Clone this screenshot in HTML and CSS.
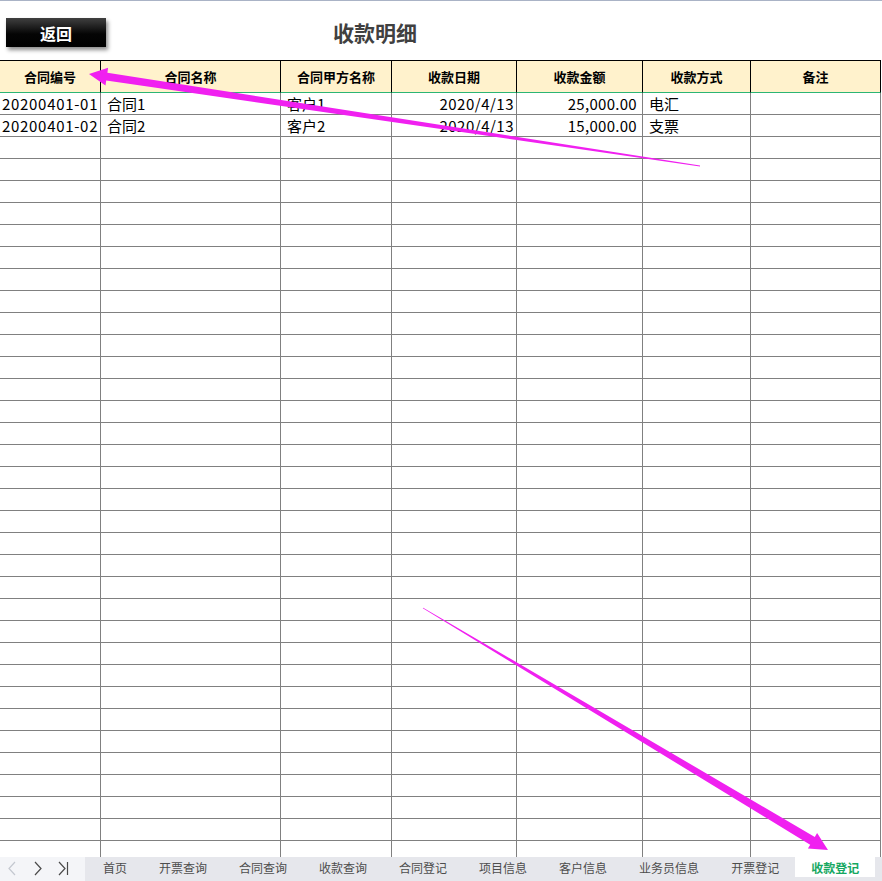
FILE: index.html
```html
<!DOCTYPE html>
<html lang="zh-CN">
<head>
    <meta charset="UTF-8">
    <title>收款明细</title>
    <link rel="stylesheet" href="styles.css">
</head>
<body>
    <div class="page">
        <div class="topbar">
            <button class="back-btn">返回</button>
            <div class="title">收款明细</div>
        </div>

        <div class="sheet">
            <table class="grid">
                <colgroup>
                    <col class="c1"><col class="c2"><col class="c3"><col class="c4"><col class="c5"><col class="c6"><col class="c7">
                </colgroup>
                <thead>
                    <tr>
                        <th>合同编号</th>
                        <th>合同名称</th>
                        <th>合同甲方名称</th>
                        <th>收款日期</th>
                        <th>收款金额</th>
                        <th>收款方式</th>
                        <th>备注</th>
                    </tr>
                </thead>
                <tbody id="rows">
                    <tr>
                        <td class="no">20200401-01</td>
                        <td>合同1</td>
                        <td>客户1</td>
                        <td class="num date">2020/4/13</td>
                        <td class="num">25,000.00</td>
                        <td>电汇</td>
                        <td></td>
                    </tr>
                    <tr>
                        <td class="no">20200401-02</td>
                        <td>合同2</td>
                        <td>客户2</td>
                        <td class="num date">2020/4/13</td>
                        <td class="num">15,000.00</td>
                        <td>支票</td>
                        <td></td>
                    </tr>
                </tbody>
            </table>
        </div>

        <div class="tabbar">
            <div class="tab-nav">
                <svg width="85" height="24" viewBox="0 0 85 24">
                    <polyline points="15,5 9,11.5 15,18" fill="none" stroke="#c4c8d0" stroke-width="1.2"/>
                    <polyline points="35,5 41,11.5 35,18" fill="none" stroke="#4a4a4a" stroke-width="1.2"/>
                    <polyline points="59,5 65,11.5 59,18" fill="none" stroke="#4a4a4a" stroke-width="1.2"/>
                    <line x1="67.5" y1="5" x2="67.5" y2="18" stroke="#4a4a4a" stroke-width="1.2"/>
                </svg>
            </div>
            <div class="tab">首页</div>
            <div class="tab">开票查询</div>
            <div class="tab">合同查询</div>
            <div class="tab">收款查询</div>
            <div class="tab">合同登记</div>
            <div class="tab">项目信息</div>
            <div class="tab">客户信息</div>
            <div class="tab">业务员信息</div>
            <div class="tab">开票登记</div>
            <div class="tab active">收款登记</div>
        </div>

        <svg class="arrows" width="882" height="881" viewBox="0 0 882 881">
            <polygon points="700,165.6 107.4,72.8 108.1,67.8 89,74 105.5,85.6 106.2,80.6 700,166.4" fill="#f020f0"/>
            <polygon points="423.2,607.7 814.8,836.9 817.1,833.1 828,850 807.9,848.5 810.2,844.7 422.8,608.3" fill="#f020f0"/>
        </svg>
    </div>

    <script>
        // pad the sheet with empty rows like the spreadsheet
        const tbody = document.getElementById('rows');
        for (let i = 0; i < 34; i++) {
            const tr = document.createElement('tr');
            for (let j = 0; j < 7; j++) {
                tr.appendChild(document.createElement('td'));
            }
            tbody.appendChild(tr);
        }
    </script>
</body>
</html>
```

FILE: styles.css
```css
body {
    margin: 0;
    font-family: "Noto Sans CJK SC", "Liberation Sans", sans-serif;
    background-color: #fff;
}
.page {
    position: relative;
    width: 882px;
    height: 881px;
    overflow: hidden;
}
.topbar {
    display: flex;
    align-items: flex-start;
    height: 42px;
    padding: 17px 0 0 6px;
    border-top: 1px solid #aab3c6;
}
.back-btn {
    width: 100px;
    height: 29px;
    border: none;
    padding: 0;
    background: linear-gradient(#404040, #050505 55%, #000);
    box-shadow: 2px 3px 4px rgba(0,0,0,0.45);
    color: white;
    font-family: inherit;
    font-size: 16px;
    font-weight: bold;
    cursor: pointer;
}
.title {
    margin-left: 227px;
    line-height: 29px;
    font-size: 21px;
    font-weight: bold;
    color: #404040;
}
.sheet {
    height: 797px;
    overflow: hidden;
}
.grid {
    border-collapse: separate;
    border-spacing: 0;
    table-layout: fixed;
    width: 881px;
}
.c1 { width: 101px; }
.c2 { width: 180px; }
.c3 { width: 111px; }
.c4 { width: 125px; }
.c5 { width: 126px; }
.c6 { width: 108px; }
.c7 { width: 130px; }
.grid th {
    height: 31px;
    padding: 0;
    background-color: #fff2cc;
    border-top: 1px solid #000;
    border-right: 1px solid #000;
    border-bottom: 1px solid #2cb574;
    font-size: 13px;
    font-weight: bold;
    color: #000;
    text-align: center;
}
.grid td {
    height: 21px;
    padding: 0 6px;
    border-right: 1px solid #808080;
    border-bottom: 1px solid #808080;
    font-size: 15px;
    line-height: 21px;
    color: #000;
    white-space: nowrap;
    overflow: hidden;
}
.grid td.no { padding-left: 2px; padding-right: 0; letter-spacing: 0.7px; }
.grid td.num { text-align: right; padding-right: 5px; padding-left: 0; letter-spacing: 0.3px; }
.grid td.date { padding-right: 2px; letter-spacing: 0.5px; }
.tabbar {
    display: flex;
    height: 24px;
    background-color: #e6e7ec;
}
.tab-nav {
    width: 85px;
    height: 24px;
    background-color: #f4f5f8;
}
.tab-nav svg { display: block; }
.tab {
    height: 20px;
    padding: 0 16px;
    font-size: 12px;
    line-height: 22px;
    color: #4d4d4d;
    white-space: nowrap;
}
.tab:nth-child(2) { margin-left: 2px; }
.tab.active {
    background-color: #fff;
    color: #16a862;
    font-weight: bold;
}
.arrows {
    position: absolute;
    left: 0;
    top: 0;
    pointer-events: none;
}
```
